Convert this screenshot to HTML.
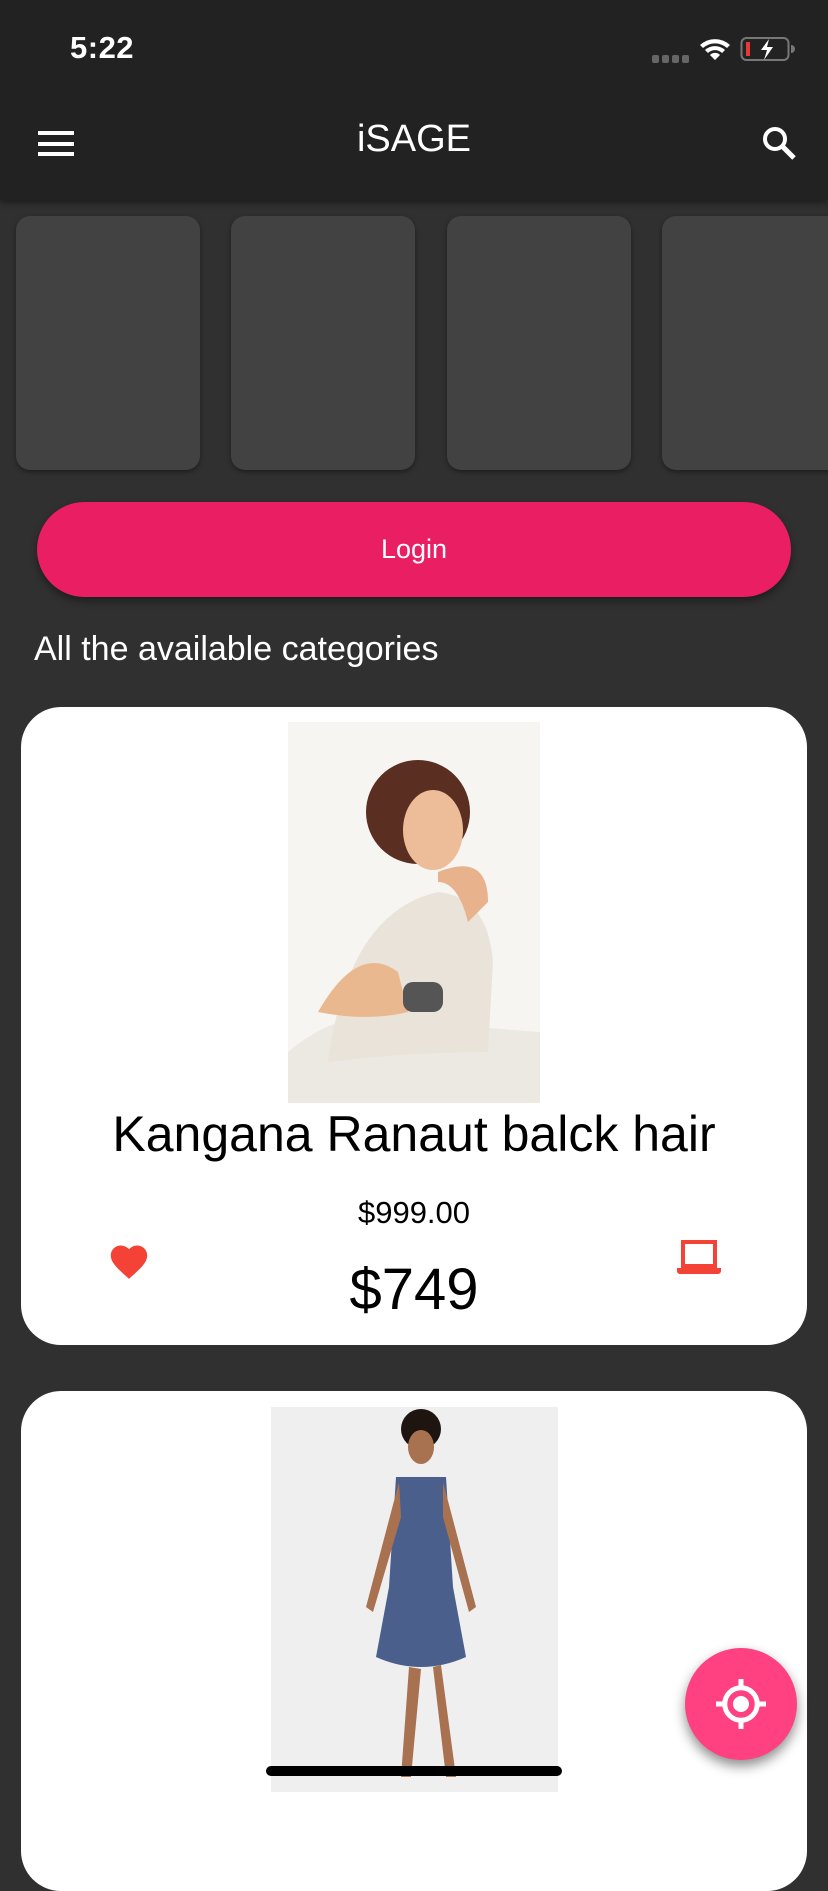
<!DOCTYPE html>
<html><head><meta charset="utf-8"><style>
*{margin:0;padding:0;box-sizing:border-box}
body{width:828px;height:1792px;overflow:hidden;background:#303030;font-family:"Liberation Sans",sans-serif;position:relative}
.top{position:absolute;left:0;top:0;width:828px;height:200px;background:#222;box-shadow:0 3px 6px rgba(0,0,0,.4);z-index:2}
.time{position:absolute;left:70px;top:30px;color:#fff;font-size:31px;font-weight:bold;letter-spacing:0.5px}
.title{position:absolute;left:0;width:828px;top:118px;text-align:center;color:#fff;font-size:38px}
.tile{position:absolute;top:216px;width:184px;height:254px;background:#424242;border-radius:14px;box-shadow:0 2px 5px rgba(0,0,0,.4)}
.login{position:absolute;left:37px;top:502px;width:754px;height:95px;border-radius:48px;background:#E91E63;color:#fff;font-size:27px;text-align:center;line-height:95px;box-shadow:0 4px 8px rgba(0,0,0,.4)}
.cat{position:absolute;left:34px;top:630px;color:#fff;font-size:34px}
.card{position:absolute;left:21px;width:786px;background:#fff;border-radius:40px}
.c{position:absolute;left:0;width:828px;text-align:center;color:#000}
.fab{position:absolute;left:685px;top:1648px;width:112px;height:112px;border-radius:56px;background:#FF4081;box-shadow:0 6px 12px rgba(0,0,0,.45)}
.home{position:absolute;left:266px;top:1766px;width:296px;height:10px;border-radius:5px;background:#000}
</style></head><body>
<div class="top">
<div class="time">5:22</div>
<div style="position:absolute;left:652px;top:55px;width:40px;height:8px;display:flex;gap:3px"><i style="width:7px;height:8px;background:#666;border-radius:2px"></i><i style="width:7px;height:8px;background:#666;border-radius:2px"></i><i style="width:7px;height:8px;background:#666;border-radius:2px"></i><i style="width:7px;height:8px;background:#666;border-radius:2px"></i></div>
<svg style="position:absolute;left:698px;top:36px" width="34" height="26" viewBox="0 0 34 26"><path d="M2 9a22 22 0 0 1 30 0l-3 3a18 18 0 0 0-24 0z M7 14a15 15 0 0 1 20 0l-3 3a10 10 0 0 0-14 0z M12 19a7 7 0 0 1 10 0l-5 5z" fill="#fff"/></svg>
<svg style="position:absolute;left:740px;top:36px" width="56" height="26" viewBox="0 0 56 26"><rect x="1.5" y="2" width="47" height="22" rx="5" fill="none" stroke="#777" stroke-width="2"/><rect x="6" y="6" width="4" height="14" fill="#e53935"/><path d="M51 9v8a3 3 0 0 0 0-8z" fill="#777"/><path d="M29 3l-8 11h6l-3 10 9-13h-6z" fill="#fff"/></svg>
<div style="position:absolute;left:38px;top:131px;width:36px;height:4px;background:#fff"></div>
<div style="position:absolute;left:38px;top:142px;width:36px;height:4px;background:#fff"></div>
<div style="position:absolute;left:38px;top:152px;width:36px;height:4px;background:#fff"></div>
<div class="title">iSAGE</div>
<svg style="position:absolute;left:760px;top:124px" width="40" height="40" viewBox="0 0 40 40"><circle cx="15" cy="15" r="10" fill="none" stroke="#fff" stroke-width="4"/><path d="M22 22l12 12" stroke="#fff" stroke-width="5"/></svg>
</div>
<div class="tile" style="left:16px"></div>
<div class="tile" style="left:231px"></div>
<div class="tile" style="left:447px"></div>
<div class="tile" style="left:662px"></div>
<div class="login">Login</div>
<div class="cat">All the available categories</div>
<div class="card" style="top:707px;height:638px"></div>
<svg style="position:absolute;left:288px;top:722px" width="252" height="381" viewBox="0 0 252 381"><rect width="252" height="381" fill="#f7f5f2"/><path d="M0 330 Q60 280 120 300 L252 310 V381 H0z" fill="#ece8e2"/><path d="M40 340 Q60 190 150 170 Q200 175 205 240 L200 330 Q120 330 40 340z" fill="#e9e3da"/><path d="M30 290 Q70 220 110 250 L120 290 Q80 300 30 290z" fill="#eab88f"/><circle cx="130" cy="90" r="52" fill="#5a2f22"/><ellipse cx="145" cy="108" rx="30" ry="40" fill="#edbc98"/><path d="M150 150 Q200 130 200 180 L180 200 Q170 160 150 160z" fill="#e8b28c"/><rect x="115" y="260" width="40" height="30" rx="10" fill="#555"/></svg>
<div class="c" style="top:1105px;font-size:50px">Kangana Ranaut balck hair</div>
<div class="c" style="top:1195px;font-size:31px">$999.00</div>
<div class="c" style="top:1256px;font-size:58px">$749</div>
<svg style="position:absolute;left:107px;top:1240px" width="44" height="40" viewBox="0 0 24 22"><path d="M12 21.35l-1.45-1.32C5.4 15.36 2 12.28 2 8.5 2 5.42 4.42 3 7.5 3c1.74 0 3.41.81 4.5 2.09C13.09 3.81 14.76 3 16.5 3 19.58 3 22 5.42 22 8.5c0 3.78-3.4 6.86-8.55 11.54z" fill="#f44336"/></svg>
<svg style="position:absolute;left:675px;top:1238px" width="48" height="40" viewBox="0 0 24 20"><path d="M4 2h16v12H4z" fill="none" stroke="#f44336" stroke-width="2"/><path d="M1 15h22v1.5a1.5 1.5 0 0 1-1.5 1.5h-19A1.5 1.5 0 0 1 1 16.5z" fill="#f44336"/></svg>
<div class="card" style="top:1391px;height:500px"></div>
<svg style="position:absolute;left:271px;top:1407px" width="287" height="385" viewBox="0 0 287 385"><rect width="287" height="385" fill="#efefef"/><circle cx="150" cy="22" r="20" fill="#1e1410"/><ellipse cx="150" cy="40" rx="13" ry="17" fill="#a8714f"/><path d="M125 70 L175 70 L182 180 L195 250 Q150 270 105 250 L118 180z" fill="#4a5f8c"/><path d="M128 75 L95 200 L102 205 L130 110z M172 75 L205 200 L198 205 L172 110z" fill="#a8714f"/><path d="M138 260 L130 370 L140 370 L150 262z M162 260 L175 370 L185 370 L170 258z" fill="#a8714f"/></svg>
<div class="fab"><svg style="position:absolute;left:26px;top:26px" width="60" height="60" viewBox="0 0 24 24"><circle cx="12" cy="12" r="3.2" fill="#fff"/><circle cx="12" cy="12" r="6.5" fill="none" stroke="#fff" stroke-width="2"/><path d="M12 2v4M12 18v4M2 12h4M18 12h4" stroke="#fff" stroke-width="2"/></svg></div>
<div class="home"></div>
</body></html>
